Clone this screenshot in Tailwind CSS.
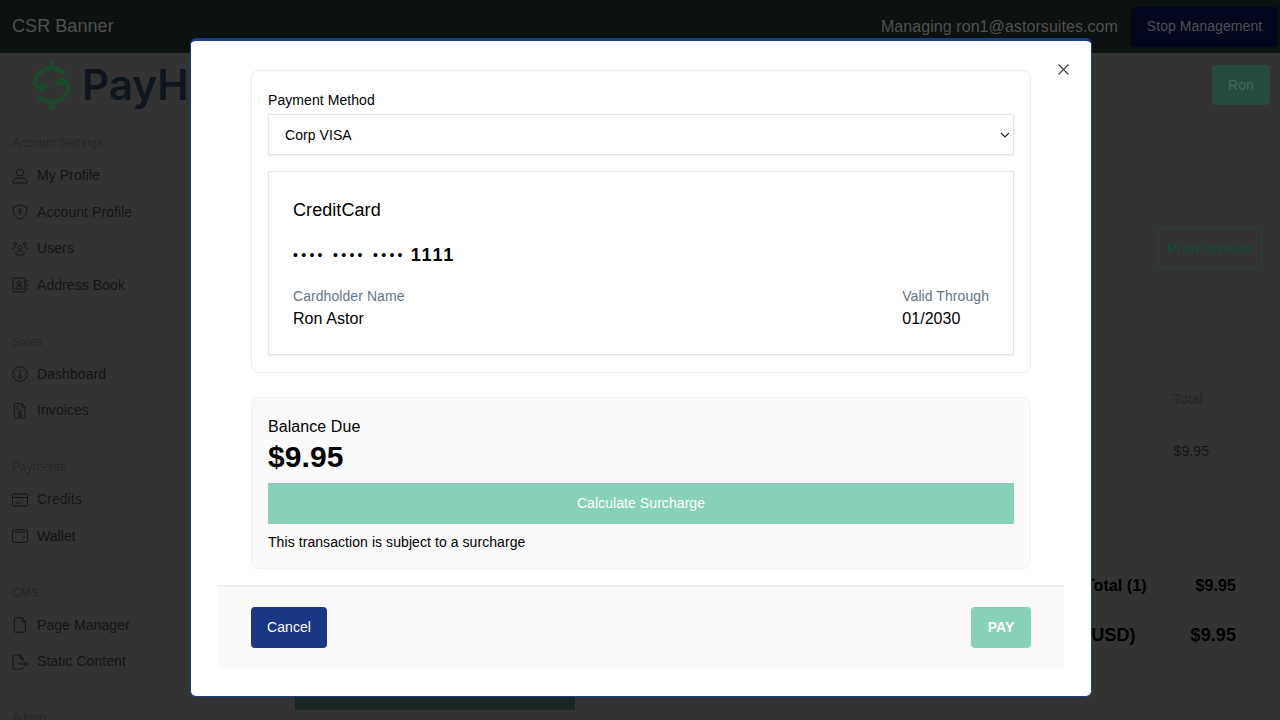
<!DOCTYPE html>
<html lang="en">
<head>
  <meta charset="UTF-8" />
  <title>Invoice payment</title>
  <script src="https://cdn.jsdelivr.net/npm/@tailwindcss/browser@4"></script>
</head>
<body class="h-[720px] w-[1280px] overflow-hidden bg-[#333333] font-['Liberation_Sans',Arial,sans-serif] text-[14px] tracking-[0.005em] text-[#141414]">
  <!-- page behind the dialog, already dimmed -->
  <header class="flex h-[53px] items-center justify-between bg-[#0c1210] pl-3 pr-[2px] text-[#505050]">
    <span class="text-[18px]">CSR Banner</span>
    <div class="flex items-center gap-[13px]">
      <span class="text-[16px]">Managing ron1@astorsuites.com</span>
      <span class="flex h-10 w-[147px] items-center justify-center rounded-sm bg-[#01071c] text-[14px]">Stop Management</span>
    </div>
  </header>

  <div class="flex h-[65px] items-center justify-between border-b border-[#303030] pl-[31px] pr-[10px]">
    <div class="flex items-center gap-[10px]">
      <svg class="h-[52px] w-[41px]" viewBox="0 0 41 52" fill="none" stroke="#1c4a2c" stroke-width="4.500">
        <path d="M4 28A16.500 16.500 0 0 1 33 15" />
        <path d="M37 24A16.500 16.500 0 0 1 8 37" />
        <path d="M20.500 3v6M20.500 43v6" stroke-width="3.500" />
        <path d="M2 26.500 18 25 11 34zM39 25 23 26.500 30 17z" fill="#1c4a2c" stroke="none" />
        <circle cx="20.500" cy="3.500" r="2.500" fill="#1c4a2c" stroke="none" />
        <circle cx="20.500" cy="48.500" r="2.500" fill="#1c4a2c" stroke="none" />
      </svg>
      <span class="font-['Inter',sans-serif] text-[42px] font-semibold leading-none text-[#0e151c]">PayHub</span>
    </div>
    <span class="flex h-10 w-[58px] items-center justify-center rounded-sm bg-[#264a3e] text-[#3d6a5b]">Ron</span>
  </div>

  <div class="flex">
    <nav class="w-[190px] pl-3 pt-4">
      <p class="mb-[15.500px] text-[12px] text-[#262626]">Account Settings</p>
      <ul class="mb-[39px] flex flex-col gap-[20px]">
        <li class="flex h-[16.500px] items-center gap-[9px]">
          <svg class="h-4 w-4" viewBox="0 0 16 16" fill="none" stroke="#141414"><circle cx="8" cy="4.500" r="3.500" /><path d="M1 15v-1.500C1 11.500 3 10 5 10h6c2 0 4 1.500 4 3.500V15z" /></svg>
          My Profile
        </li>
        <li class="flex h-[16.500px] items-center gap-[9px]">
          <svg class="h-4 w-4" viewBox="0 0 16 16" fill="none" stroke="#141414"><path d="M8 .8 15 3c.3 6-2 10.500-7 12.500C3 13.500.7 9 1 3z" /><circle cx="8" cy="6.500" r="1.500" /><path d="M8 8v3" /></svg>
          Account Profile
        </li>
        <li class="flex h-[16.500px] items-center gap-[9px]">
          <svg class="h-4 w-4" viewBox="0 0 16 16" fill="none" stroke="#141414" stroke-width="0.900"><circle cx="3" cy="3" r="1.500" /><circle cx="13" cy="3" r="1.500" /><circle cx="8" cy="6.500" r="2" /><path d="M4 14v-1.500c0-1.500 1-2.500 2.500-2.500h3c1.500 0 2.500 1 2.500 2.500V14zM.5 9c0-2 1-3 3.500-3M15.500 9c0-2-1-3-3.500-3" /></svg>
          Users
        </li>
        <li class="flex h-[16.500px] items-center gap-[9px]">
          <svg class="h-4 w-4" viewBox="0 0 16 16" fill="none" stroke="#141414"><rect x="1" y="1" width="12" height="14" rx="1" /><circle cx="7" cy="6" r="1.800" /><path d="M3.500 12c0-2 1.500-3 3.500-3s3.500 1 3.500 3zM15 3v2M15 7v2M15 11v2" /></svg>
          Address Book
        </li>
      </ul>

      <p class="mb-[15.500px] text-[12px] text-[#262626]">Sales</p>
      <ul class="mb-[39px] flex flex-col gap-[20px]">
        <li class="flex h-[16.500px] items-center gap-[9px]">
          <svg class="h-4 w-4" viewBox="0 0 16 16" fill="none" stroke="#141414"><circle cx="8" cy="8" r="7.300" /><circle cx="8" cy="11" r="1.500" /><path d="M8 9.500V3M3 8h1M12 8h1M4.500 4.500l.7.7M11.500 4.500l-.7.7" /></svg>
          Dashboard
        </li>
        <li class="flex h-[16.500px] items-center gap-[9px]">
          <svg class="h-4 w-4" viewBox="0 0 16 16" fill="none" stroke="#141414"><path d="M3.500.8H10l3 3.200V14a1.200 1.200 0 0 1-1.200 1.200H3.500A1.200 1.200 0 0 1 2.300 14V2A1.200 1.200 0 0 1 3.500.8zM10 .8V4h3M4.500 3.500H7M4.500 6H7M9.800 8.500H7.200a1 1 0 0 0 0 2.300h1.600a1 1 0 0 1 0 2.400H6M8 7.500v7" stroke-width="0.900" /></svg>
          Invoices
        </li>
      </ul>

      <p class="mb-[15.500px] text-[12px] text-[#262626]">Payments</p>
      <ul class="mb-[39px] flex flex-col gap-[20px]">
        <li class="flex h-[16.500px] items-center gap-[9px]">
          <svg class="h-4 w-4" viewBox="0 0 16 16" fill="none" stroke="#141414"><rect x="0.500" y="2" width="15" height="12" rx="1" /><path d="M.5 5.500h15M3 11h4M9 11h1.500" /></svg>
          Credits
        </li>
        <li class="flex h-[16.500px] items-center gap-[9px]">
          <svg class="h-4 w-4" viewBox="0 0 16 16" fill="none" stroke="#141414"><rect x="0.500" y="1.500" width="15" height="13" rx="2" /><path d="M.5 4h15" /><circle cx="12" cy="9" r="0.400" /></svg>
          Wallet
        </li>
      </ul>

      <p class="mb-[15.500px] text-[12px] text-[#262626]">CMS</p>
      <ul class="mb-[39px] flex flex-col gap-[20px]">
        <li class="flex h-[16.500px] items-center gap-[9px]">
          <svg class="h-4 w-4" viewBox="0 0 16 16" fill="none" stroke="#141414"><path d="M3.500.8H10l3.500 3.700V14a1.200 1.200 0 0 1-1.200 1.200H3.500A1.200 1.200 0 0 1 2.300 14V2A1.200 1.200 0 0 1 3.500.8zM10 .8v3.700h3.500" /></svg>
          Page Manager
        </li>
        <li class="flex h-[16.500px] items-center gap-[9px]">
          <svg class="h-4 w-4" viewBox="0 0 16 16" fill="none" stroke="#141414"><path d="M11 7V4.500L8 1H2a1 1 0 0 0-1 1v12a1 1 0 0 0 1 1h8a1 1 0 0 0 1-1v-1M8 1v3.500h3M6 10h9.500M13 7.500l2.500 2.500-2.500 2.500" /></svg>
          Static Content
        </li>
      </ul>

      <p class="text-[12px] text-[#262626]">Admin</p>
    </nav>

    <main class="flex flex-1 flex-col items-end pr-[18px]">
      <div class="mt-[88px] h-px w-full bg-[#303030]"></div>
      <span class="mt-[21px] flex h-10 w-[104px] items-center justify-center rounded-sm border border-[#24433a] font-bold text-[#1d4438]">Print Invoice</span>
      <div class="mt-[108px] flex h-[101px] w-[500px] flex-col rounded-sm border border-[#303030]">
        <div class="flex h-[50px] items-center justify-end border-b border-[#303030] pb-[4px] pr-[56px] text-[#262626]"><span class="w-[32px]">Total</span></div>
        <div class="flex flex-1 items-center justify-end pr-[52px]">$9.95</div>
      </div>
      <div class="mt-[18px] flex h-[230px] w-[500px] flex-col rounded-md border border-[#303030] pr-[25px] pt-[78px] text-black">
        <div class="flex justify-end gap-[49px] text-[16px] font-bold"><span>Total (1)</span><span>$9.95</span></div>
        <div class="mt-[24px] flex justify-end gap-[55px] text-[18px] font-bold"><span>(USD)</span><span>$9.95</span></div>
      </div>
    </main>
  </div>

  <div class="fixed left-[295px] top-[697px] h-[13px] w-[280px] bg-[#1a2621]"></div>

  <!-- payment dialog -->
  <div class="fixed left-[190px] top-[38px] flex h-[659px] w-[902px] flex-col rounded-md border border-t-[3px] border-[#1e3a8a] bg-white px-[27px] pt-[29px] text-[#000]">
    <button class="absolute right-[22px] top-[23px] text-[#444]">
      <svg class="h-[11px] w-[11px]" viewBox="0 0 11 11" fill="none" stroke="#444" stroke-width="1.200"><path d="M.5.5l10 10M10.500.5l-10 10" /></svg>
    </button>

    <div class="mx-[33px] flex flex-col gap-[17px]">
      <section class="rounded-lg border border-[#ececec] px-4 pb-[17px] pt-[21px]">
        <p class="mb-[6px] leading-[16px]">Payment Method</p>
        <div class="mb-4 flex h-[41px] items-center justify-between border border-[#e5e5e5] pl-4 pt-px shadow-[0_1px_2px_rgba(0,0,0,0.08)]">
          Corp VISA
          <svg class="h-[16px] w-[16px]" viewBox="0 0 16 16" fill="none" stroke="#222" stroke-width="1.200"><path d="M4 6l4 4 4-4" /></svg>
        </div>
        <div class="h-[184px] border border-[#e5e5e5] px-6 pt-[27px] shadow-[0_1px_2px_rgba(0,0,0,0.08)]">
          <p class="text-[18px] leading-[22px]">CreditCard</p>
          <p class="mt-[23px] flex h-[22px] items-center leading-[22px]">
            <span class="text-[14px] tracking-[3.300px]">•••• •••• ••••</span>
            <span class="ml-[5px] text-[18px] font-bold tracking-[1.800px]">1111</span>
          </p>
          <div class="mt-[22px] flex justify-between">
            <div>
              <p class="leading-[16px] text-[#64748b]">Cardholder Name</p>
              <p class="mt-[5px] text-[16px] leading-[20px]">Ron Astor</p>
            </div>
            <div>
              <p class="leading-[16px] text-[#64748b]">Valid Through</p>
              <p class="mt-[5px] text-[16px] leading-[20px]">01/2030</p>
            </div>
          </div>
        </div>
      </section>

      <section class="mt-[7px] h-[172px] rounded-lg border border-[#f1f1f1] bg-[#fafafa] px-4 pt-[19px]">
        <p class="text-[16px] leading-[20px]">Balance Due</p>
        <p class="mt-[2px] text-[30px] font-bold leading-[36px]">$9.95</p>
        <div class="mt-[8px] flex h-[41px] items-center justify-center bg-[#88d1b9] text-white">Calculate Surcharge</div>
        <p class="mt-[10px] leading-[16px]">This transaction is subject to a surcharge</p>
      </section>
    </div>

    <footer class="mt-4 flex h-[83px] items-center justify-between border-t-2 border-[#eeeeee] bg-[#fafafa] px-[33px]">
      <button class="h-[41px] w-[76px] rounded-sm bg-[#1a3784] text-white">Cancel</button>
      <button class="h-[41px] w-[60px] rounded-sm bg-[#88d1b9] font-bold text-white">PAY</button>
    </footer>
  </div>
</body>
</html>
